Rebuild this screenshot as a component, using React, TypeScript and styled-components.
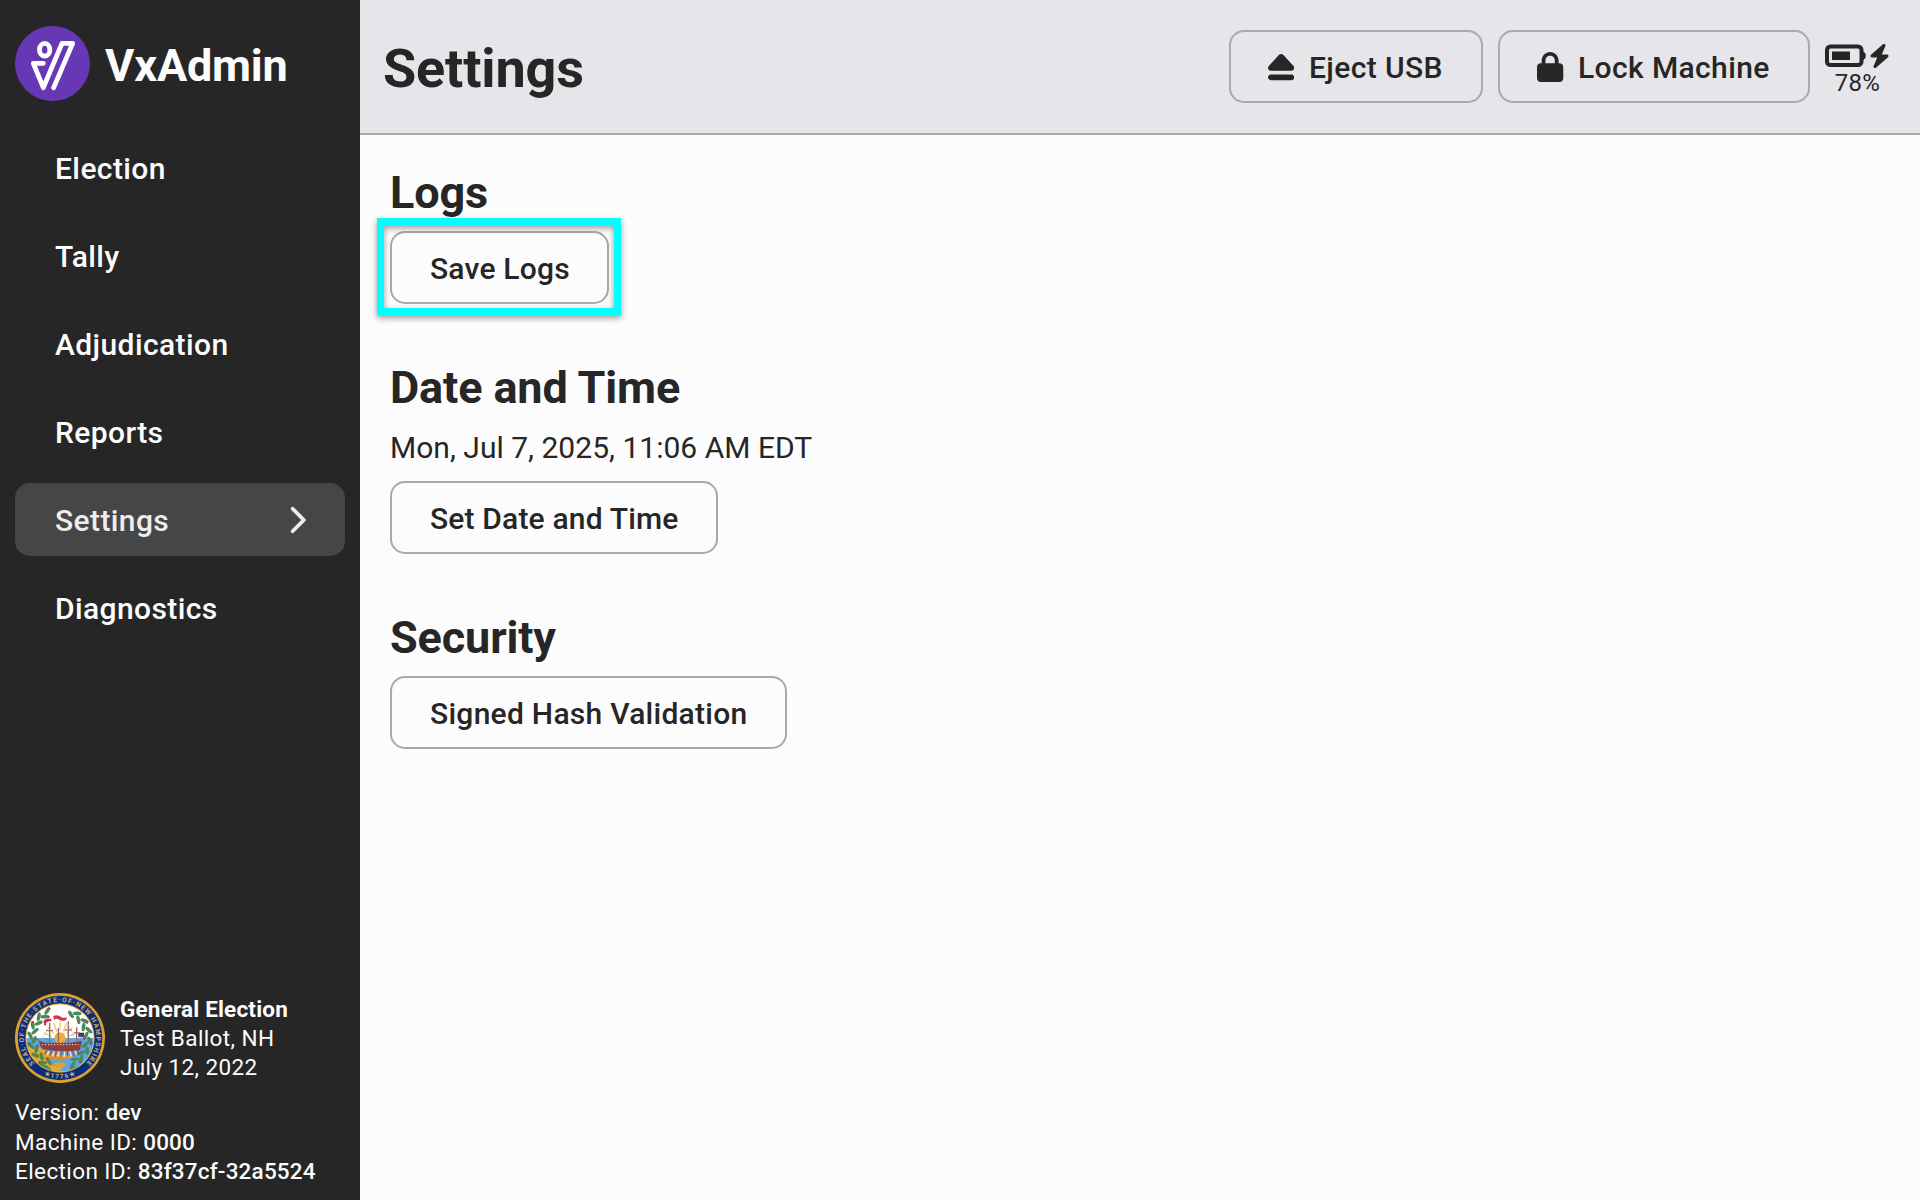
import React from 'react';
import styled, { createGlobalStyle, css } from 'styled-components';
import { FaBolt, FaChevronRight, FaEject, FaLock } from 'react-icons/fa6';

const GlobalStyle = createGlobalStyle`
  *, *::before, *::after { box-sizing: border-box; }
  html, body { margin: 0; padding: 0; }
  body {
    background: #fcfcfc;
    color: #262626;
    font-family: Roboto, "Liberation Sans", sans-serif;
    font-size: 30px;
    line-height: 1.3;
    overflow: hidden;
  }
  h1, h2, p { margin: 0; }
  svg { flex: none; }
`;

const Screen = styled.div`
  display: flex;
  width: 1920px;
  height: 1200px;
`;

const Sidebar = styled.aside`
  display: flex;
  flex-direction: column;
  flex: none;
  width: 360px;
  padding: 26px 15px 14px;
  background: #262626;
  color: #fcfcfc;
`;

const Brand = styled.div`
  display: flex;
  align-items: center;
  gap: 15px;
  height: 75px;
`;

const BrandName = styled.div`
  font-size: 45px;
  line-height: 1.2;
  font-weight: 700;
  padding-top: 5px;
  letter-spacing: -0.2px;
`;

const Nav = styled.nav`
  display: flex;
  flex-direction: column;
  gap: 15px;
  margin-top: 30px;
`;

const NavItem = styled.a<{ $active?: boolean }>`
  display: flex;
  align-items: center;
  justify-content: space-between;
  height: 73px;
  padding: 1px 39.5px 0 40px;
  border-radius: 15px;
  font-weight: 500;
  letter-spacing: 0.4px;
  ${(p) =>
    p.$active &&
    css`
      background: #464648;
      color: #ededed;
    `}
`;

const Glyph = styled.span<{ $width: number; $height: number }>`
  display: flex;
  flex: none;
  svg {
    width: ${(p) => p.$width}px;
    height: ${(p) => p.$height}px;
  }
`;

const Footer = styled.footer`
  margin-top: auto;
  font-size: 22.5px;
  line-height: 29.2px;
  letter-spacing: 0.4px;
`;

const ElectionCard = styled.div`
  display: flex;
  align-items: center;
  gap: 15px;
  margin-bottom: 15px;
`;

const ElectionInfo = styled.div`
  line-height: 29px;
`;

const Strong = styled.span<{ $weight: number }>`
  font-weight: ${(p) => p.$weight};
  letter-spacing: 0.18px;
`;

const Main = styled.main`
  display: flex;
  flex-direction: column;
  flex: 1;
`;

const Header = styled.header`
  display: flex;
  align-items: center;
  justify-content: space-between;
  height: 135px;
  padding: 0 30px 0 23px;
  background: #e6e5ea;
  border-bottom: 2px solid #a9a8ad;
`;

const Title = styled.h1`
  padding-top: 5px;
  font-size: 54px;
  line-height: 1.2;
  font-weight: 700;
  letter-spacing: -0.15px;
`;

const Toolbar = styled.div`
  display: flex;
  align-items: center;
  gap: 15px;
`;

const Button = styled.button<{ $tracking?: number }>`
  display: flex;
  align-items: center;
  gap: 14.5px;
  height: 73px;
  padding: 1px 37.5px 0 38px;
  border: 2px solid #a9a8ad;
  border-radius: 15px;
  background: transparent;
  color: inherit;
  font: inherit;
  font-weight: 500;
  letter-spacing: ${(p) => p.$tracking ?? 0.17}px;
  white-space: nowrap;
`;

const ToolbarButton = styled(Button)`
  padding-left: 37.2px;
  padding-right: 38.3px;
`;

const Battery = styled.div`
  display: flex;
  flex-direction: column;
  align-items: center;
  width: 65px;
  padding-top: 8px;
  font-size: 24px;
  line-height: 29px;
  letter-spacing: 0.3px;
`;

const BatteryIcons = styled.div`
  display: flex;
  align-items: center;
  justify-content: space-between;
  width: 100%;
  height: 26px;
`;

const Content = styled.div`
  display: flex;
  flex-direction: column;
  align-items: flex-start;
  gap: 56px;
  padding: 30px;
`;

const Section = styled.section`
  display: flex;
  flex-direction: column;
  align-items: flex-start;
`;

const SectionTitle = styled.h2`
  padding-top: 1px;
  font-size: 45px;
  line-height: 54px;
  font-weight: 700;
  letter-spacing: -0.13px;
  margin-bottom: 11px;
`;

const DateText = styled.p`
  margin: 2px 0 14px;
  line-height: 39px;
  letter-spacing: 0.02px;
`;

const Highlighted = styled.div`
  position: relative;
  &::after {
    content: '';
    position: absolute;
    inset: -13px -12px -11px -13px;
    border: 7px solid #00ffff;
    filter: drop-shadow(0 3px 3px rgba(0, 0, 0, 0.4));
    pointer-events: none;
  }
`;

function Logo() {
  return (
    <svg width="75" height="75" viewBox="0 0 225 225">
      <circle cx="112.5" cy="112.5" r="112.5" fill="#6638b6" />
      <g fill="none" stroke="#fff" strokeWidth="14.5" strokeLinecap="round" strokeLinejoin="round">
        <ellipse cx="89" cy="71" rx="15.5" ry="19" />
        <path d="M85 112H55L85 185L141 52H173L116 185" />
      </g>
    </svg>
  );
}

function Laurel() {
  const leaves: React.ReactNode[] = [];
  for (let i = 0; i < 32; i++) {
    const angle = -155 + i * 10;
    const inner = i % 2 === 0;
    const r = inner ? 78 : 90;
    if (angle > -24 && angle < 24) continue;
    leaves.push(
      <g key={i} transform={`rotate(${angle})`}>
        <ellipse cx="0" cy={-r} rx="13" ry="5.5" fill="#4a8a5a" transform={`rotate(${inner ? 32 : -32} 0 ${-r})`} />
        {i % 4 === 1 && <circle cx="9" cy={-r - 3} r="2.8" fill="#c52a3c" />}
        {i % 4 === 0 && <circle cx="8" cy={-r + 7} r="2.8" fill="#c52a3c" />}
      </g>,
    );
  }
  return <>{leaves}</>;
}

function Seal() {
  return (
    <svg width="90" height="90" viewBox="-135 -135 270 270">
      <defs>
        <clipPath id="seal-scene">
          <circle r="101" />
        </clipPath>
        <path id="seal-legend" d="M-76.500 76.500A108.200 108.200 0 1 1 76.500 76.500" />
        <path id="seal-year" d="M-70 99.500A121.600 121.600 0 0 0 70 99.500" />
      </defs>
      <circle r="135" fill="#dda22c" />
      <circle r="127" fill="#0b2f80" />
      <circle r="104" fill="#dda22c" />
      <circle r="101" fill="#fff" />
      <g clipPath="url(#seal-scene)">
        <path d="M-101 0H101V110H-101Z" fill="#5aa5e6" />
        <path d="M-101 24L-62 30L-20 48L40 54L22 64L-30 66L-18 84L10 88L-10 110H-101Z" fill="#e8a92f" />
        <path d="M-50 58Q-10 52 30 60L10 67L-46 66Z" fill="#d98d28" />
        <path d="M-101 74L-60 74L-36 84L-20 101H-101Z" fill="#4a9058" />
        <path d="M20 101L42 88L101 66V101Z" fill="#4a9058" />
        <circle cx="0" cy="0" r="17" fill="#f0b02e" />
        <g stroke="#f0b02e" strokeWidth="3">
          <path d="M0-22V-50M10-20L19-45M-10-20L-19-45M19-13L37-32M-19-13L-37-32M24-4L48-15M-24-4L-48-15" />
        </g>
        <path d="M-64 8L-46 14H30L66 8L60 36Q20 46-50 34Q-60 26-64 8Z" fill="#8f3c3b" />
        <path d="M-54 20H56" stroke="#efe2df" strokeWidth="3" strokeDasharray="4 5" />
        <g stroke="#9c6460" strokeWidth="4">
          <path d="M-31 12V-46M-5 12V-30M25 12V-50M50 10V-32" />
          <path d="M-64 8L-78-5" />
        </g>
        <path d="M-31-36L-58 8M25-40L0 8M25-40L48 8" stroke="#b8b2ad" strokeWidth="1.5" fill="none" />
        <path d="M-42-22H-20M14-24H36M42-16H58" stroke="#9c6460" strokeWidth="3" />
        <path d="M-40 38L-46 50M-26 40L-31 54M-11 41L-15 56M5 41L2 56M21 41L23 56M37 40L42 54M50 37L59 48" stroke="#9d514c" strokeWidth="4" />
        <path d="M-33 39L-38 52M-18 41L-22 55M-3 41L-6 56M14 41L13 56M30 40L34 55M44 38L52 50" stroke="#f1e8e6" strokeWidth="4" />
        <path d="M55-16H72V-3H55Z" fill="#24346e" />
        <path d="M57-8H72M57-3H72" stroke="#c9384b" strokeWidth="2" />
      </g>
      <Laurel />
      <path d="M-20-66Q-8-72 2-64Q10-58 22-62L18-54Q5-48-4-56Q-12-60-18-54Z" fill="#cf3346" />
      <path d="M-49-53Q-38-62-26-57V-50Q-36-52-42-45L-42-36L-48-40Z" fill="#cf3346" />
      <path d="M-18 77Q0 70 20 77L10 90H-10Z" fill="#dda22c" />
      <text fill="#cfae68" fontFamily="Roboto, sans-serif" fontSize="20" fontWeight="700">
        <textPath href="#seal-legend" textLength="508" lengthAdjust="spacing">
          SEAL·OF·THE·STATE·OF·NEW HAMPSHIRE
        </textPath>
      </text>
      <text fill="#cfae68" fontFamily="Roboto, sans-serif" fontSize="19" fontWeight="700" textAnchor="middle" letterSpacing="4">
        <textPath href="#seal-year" startOffset="50%">★1776★</textPath>
      </text>
    </svg>
  );
}

function BatteryIcon() {
  return (
    <svg width="41" height="24" viewBox="0 0 41 24">
      <rect x="2" y="2.500" width="34.500" height="18.500" rx="3.500" fill="none" stroke="#262626" strokeWidth="4" />
      <path d="M37 7Q40.800 8 40.800 11.800Q40.800 15.500 37 16.500Z" fill="#262626" />
      <rect x="7" y="7.500" width="18" height="8.500" fill="#262626" />
    </svg>
  );
}

const NAV = ['Election', 'Tally', 'Adjudication', 'Reports', 'Settings', 'Diagnostics'];

export default function App() {
  return (
    <>
      <GlobalStyle />
      <Screen>
        <Sidebar>
          <Brand>
            <Logo />
            <BrandName>VxAdmin</BrandName>
          </Brand>
          <Nav>
            {NAV.map((label) => (
              <NavItem key={label} $active={label === 'Settings'}>
                {label}
                {label === 'Settings' && (
                  <Glyph $width={18.75} $height={30}><FaChevronRight /></Glyph>
                )}
              </NavItem>
            ))}
          </Nav>
          <Footer>
            <ElectionCard>
              <Seal />
              <ElectionInfo>
                <div><Strong $weight={700}>General Election</Strong></div>
                <div>Test Ballot, NH</div>
                <div>July 12, 2022</div>
              </ElectionInfo>
            </ElectionCard>
            <div>Version: <Strong $weight={500}>dev</Strong></div>
            <div>Machine ID: <Strong $weight={500}>0000</Strong></div>
            <div>Election ID: <Strong $weight={500}>83f37cf-32a5524</Strong></div>
          </Footer>
        </Sidebar>
        <Main>
          <Header>
            <Title>Settings</Title>
            <Toolbar>
              <ToolbarButton $tracking={0.38}>
                <Glyph $width={26.25} $height={30}><FaEject /></Glyph>
                Eject USB
              </ToolbarButton>
              <ToolbarButton $tracking={0.38}>
                <Glyph $width={26.25} $height={30}><FaLock /></Glyph>
                Lock Machine
              </ToolbarButton>
              <Battery>
                <BatteryIcons>
                  <BatteryIcon />
                  <Glyph $width={21} $height={24}><FaBolt /></Glyph>
                </BatteryIcons>
                78%
              </Battery>
            </Toolbar>
          </Header>
          <Content>
            <Section>
              <SectionTitle>Logs</SectionTitle>
              <Highlighted>
                <Button $tracking={0.2}>Save Logs</Button>
              </Highlighted>
            </Section>
            <Section>
              <SectionTitle>Date and Time</SectionTitle>
              <DateText>Mon, Jul 7, 2025, 11:06 AM EDT</DateText>
              <Button>Set Date and Time</Button>
            </Section>
            <Section>
              <SectionTitle>Security</SectionTitle>
              <Button $tracking={0.27}>Signed Hash Validation</Button>
            </Section>
          </Content>
        </Main>
      </Screen>
    </>
  );
}
